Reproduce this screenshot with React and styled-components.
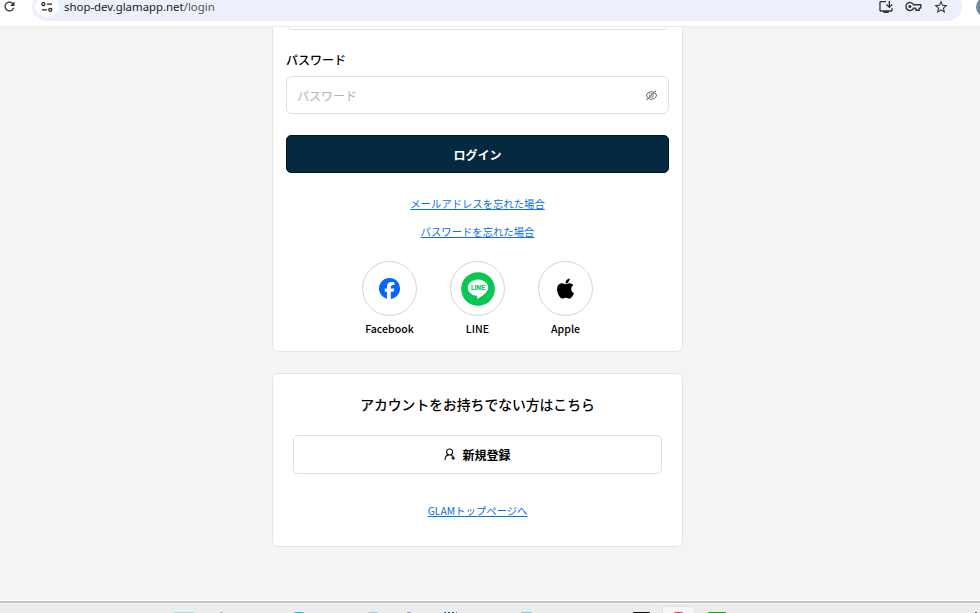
import styled, { createGlobalStyle } from 'styled-components'
import { AiOutlineEyeInvisible } from 'react-icons/ai'
import { FaApple, FaFacebook } from 'react-icons/fa6'
import { MdRefresh, MdOutlineInstallDesktop, MdStarBorder } from 'react-icons/md'

const GlobalStyle = createGlobalStyle`
  * {
    box-sizing: border-box;
  }

  body {
    margin: 0;
    font-family: 'Noto Sans CJK JP', sans-serif;
    color: #000;
  }
`

const Screen = styled.div`
  display: flex;
  flex-direction: column;
  height: 613px;
  overflow: hidden;
  background: #f4f4f4;
`

const Toolbar = styled.header`
  display: flex;
  flex: none;
  align-items: flex-end;
  height: 27px;
  padding: 0 0 5px 2px;
  overflow: hidden;
  background: #fff;
  border-bottom: 1px solid #ebebeb;
  color: #333;
`

const ToolbarButton = styled.span`
  display: flex;
  align-items: center;
  height: 29px;
  margin-left: ${props => props.gap || 0}px;
`

const AddressBar = styled.div`
  display: flex;
  flex: none;
  align-items: center;
  width: 930px;
  height: 29px;
  margin-left: 15px;
  padding: 0 13px 0 3px;
  border-radius: 15px;
  background: #ebf0fa;
`

const SiteInfo = styled.span`
  display: flex;
  align-items: center;
  justify-content: center;
  width: 24px;
  height: 20px;
  border-radius: 50%;
  background: #fff;
`

const Url = styled.span`
  margin: 0 auto 0 5px;
  font: 11.4px/13px 'Noto Sans', sans-serif;
  color: #222;
`

const UrlPath = styled.span`
  color: #555;
`

const Avatar = styled.span`
  flex: none;
  width: 20px;
  height: 20px;
  margin: 0 0 4px 14px;
  border-radius: 50%;
  background: #6f8b99;
`

const Page = styled.main`
  flex: 1;
  min-height: 0;
  overflow: hidden;
`

const Card = styled.section`
  display: flex;
  flex-direction: column;
  width: 411px;
  margin: ${props => props.top}px 0 0 272px;
  padding: ${props => props.pad};
  height: ${props => props.height}px;
  background: #fff;
  border: 1px solid #e5e5e5;
  border-radius: 7px;
`

const Field = styled.div`
  display: flex;
  flex: none;
  align-items: center;
  justify-content: space-between;
  height: 38px;
  padding: 0 10px;
  border: 1px solid #e0e0e0;
  border-radius: 6px;
  font-size: 12px;
  color: #b2b2b2;
`

const Label = styled.label`
  margin: 20px 0 7px;
  font-size: 12px;
  font-weight: 500;
  line-height: 19px;
`

const LoginButton = styled.button`
  flex: none;
  height: 38px;
  margin: 21px 0 0;
  padding: 0;
  border: 1px solid #03122f;
  border-radius: 5px;
  background: #052940;
  color: #fff;
  font: bold 12px 'Noto Sans CJK JP', sans-serif;
`

const TextLink = styled.a`
  align-self: center;
  margin-top: ${props => props.top}px;
  font-size: 10.35px;
  line-height: 16px;
  color: #0b70e0;
  text-decoration: underline;
`

const Socials = styled.div`
  display: flex;
  justify-content: center;
  gap: 33px;
  margin-top: 21px;
`

const Social = styled.div`
  display: flex;
  flex-direction: column;
  align-items: center;
  width: 55px;
  font-size: 10.6px;
  font-weight: 500;
  line-height: 16px;
`

const SocialIcon = styled.span`
  display: flex;
  align-items: center;
  justify-content: center;
  width: 55px;
  height: 55px;
  margin-bottom: 5px;
  border: 1px solid #d5d5d5;
  border-radius: 50%;
`

const Title = styled.h2`
  margin: 0;
  text-align: center;
  font-size: 13.8px;
  font-weight: 500;
  line-height: 22px;
`

const RegisterButton = styled.button`
  display: flex;
  flex: none;
  align-items: center;
  justify-content: center;
  gap: 6px;
  height: 39px;
  margin: 20px 0 0;
  padding: 0;
  border: 1px solid #e0e0e0;
  border-radius: 5px;
  background: #fff;
  color: #000;
  font: bold 12px 'Noto Sans CJK JP', sans-serif;
`

const Taskbar = styled.footer`
  display: flex;
  flex: none;
  align-items: flex-end;
  height: 13px;
  border-top: 1px solid #fff;
  background: linear-gradient(#c4c4c4 2px, #f8f8f8 2px, #f8f8f8 3px, #ececec 3px);
`

const TaskIcon = styled.span`
  flex: none;
  width: ${props => props.width}px;
  height: ${props => props.height || 1}px;
  margin-left: ${props => props.gap}px;
  border-radius: ${props => props.round ? '50% 50% 0 0' : '1px 1px 0 0'};
  background: ${props => props.color};
`

const ActiveTask = styled.span`
  display: flex;
  align-items: flex-end;
  justify-content: center;
  width: 33px;
  height: 7px;
  margin-left: 12px;
  border: 1px solid #e2e2e2;
  border-bottom: 0;
  border-radius: 3px 3px 0 0;
  background: #f7f7f7;
`

const TuneIcon = () =>
  <svg width='12' height='10' viewBox='0 0 12 10' fill='none' stroke='#222' strokeWidth='1.3'>
    <circle cx='2.4' cy='2.2' r='1.5' />
    <path d='M6 2.2h5M1 7.8h5' />
    <circle cx='9.3' cy='7.8' r='1.5' />
  </svg>

const KeyIcon = () =>
  <svg width='17' height='11' viewBox='0 0 17 11' fill='none' stroke='#333' strokeWidth='1.4'>
    <path d='M8.6 3.8A4 4 0 1 0 8.6 7.1H10.8V9.2H14.2V7.1H15.8V3.8Z' strokeLinejoin='round' />
    <circle cx='4.9' cy='5.4' r='1.5' fill='#333' stroke='none' />
  </svg>

const LineIcon = () =>
  <svg width='34' height='34' viewBox='0 0 34 34'>
    <circle cx='17' cy='17' r='16.8' fill='#07c755' />
    <path d='M17 7.4c-5.7 0-10.2 3.7-10.2 8.3 0 4.1 3.7 7.5 8.6 8.1 1 .2.9.7.7 2.1-.1.8.2 1 .9.6 3.7-2.1 10.2-6.2 10.2-10.8 0-4.6-4.5-8.3-10.2-8.3Z' fill='#fff' />
    <text x='17' y='17.9' textAnchor='middle' textLength='14' lengthAdjust='spacingAndGlyphs' fontFamily='Inter, sans-serif' fontWeight='800' fontSize='6.4' fill='#07c755'>LINE</text>
  </svg>

const UserPlusIcon = () =>
  <svg width='12' height='13' viewBox='0 0 12 13' fill='none' stroke='#111' strokeWidth='1.1' strokeLinecap='round'>
    <circle cx='5.6' cy='4' r='3' />
    <path d='M1 11.7C1.2 8.9 2.6 7.2 4.6 6.9M6.7 6.9C7.6 7.2 8.2 7.7 8.7 8.3M9.2 8.6v3M7.7 10.1h3' />
  </svg>

const Browser = () =>
  <Toolbar>
    <ToolbarButton>
      <MdRefresh size={15} />
    </ToolbarButton>
    <AddressBar>
      <SiteInfo><TuneIcon /></SiteInfo>
      <Url>shop-dev.glamapp.net<UrlPath>/login</UrlPath></Url>
      <ToolbarButton><MdOutlineInstallDesktop size={16} /></ToolbarButton>
      <ToolbarButton gap={11}><KeyIcon /></ToolbarButton>
      <ToolbarButton gap={11}><MdStarBorder size={16} /></ToolbarButton>
    </AddressBar>
    <Avatar />
  </Toolbar>

function App () {
  return (
    <Screen>
      <GlobalStyle />
      <Browser />
      <Page>
        <Card top={-54} pad='18px 13px 0' height={379}>
          <Field />
          <Label>パスワード</Label>
          <Field>
            パスワード
            <AiOutlineEyeInvisible size={13} color='#666' />
          </Field>
          <LoginButton>ログイン</LoginButton>
          <TextLink top={23}>メールアドレスを忘れた場合</TextLink>
          <TextLink top={12}>パスワードを忘れた場合</TextLink>
          <Socials>
            <Social>
              <SocialIcon><FaFacebook size={21} color='#0866ff' /></SocialIcon>
              Facebook
            </Social>
            <Social>
              <SocialIcon><LineIcon /></SocialIcon>
              LINE
            </Social>
            <Social>
              <SocialIcon><FaApple size={23} color='#000' /></SocialIcon>
              Apple
            </Social>
          </Socials>
        </Card>
        <Card top={21} pad='19px 20px 0' height={174}>
          <Title>アカウントをお持ちでない方はこちら</Title>
          <RegisterButton>
            <UserPlusIcon />
            新規登録
          </RegisterButton>
          <TextLink top={29}>GLAMトップページへ</TextLink>
        </Card>
      </Page>
      <Taskbar>
        <TaskIcon gap={174} width={20} color='#b5d6df' />
        <TaskIcon gap={26} width={3} color='#aaa' />
        <TaskIcon gap={71} width={10} color='#24a9c3' round />
        <TaskIcon gap={64} width={10} color='#a9cbd9' />
        <TaskIcon gap={29} width={4} color='#8d85d8' round />
        <TaskIcon gap={33} width={13} color='repeating-linear-gradient(90deg, #255468 0 2px, #ececec 2px 4px)' />
        <TaskIcon gap={64} width={11} color='#7fcaed' />
        <TaskIcon gap={101} width={17} color='#111' />
        <ActiveTask>
          <TaskIcon gap={0} width={9} color='#c83c38' round />
        </ActiveTask>
        <TaskIcon gap={13} width={18} color='#14a018' />
        <TaskIcon gap={249} width={2} color='#333' />
      </Taskbar>
    </Screen>
  )
}

export default App
